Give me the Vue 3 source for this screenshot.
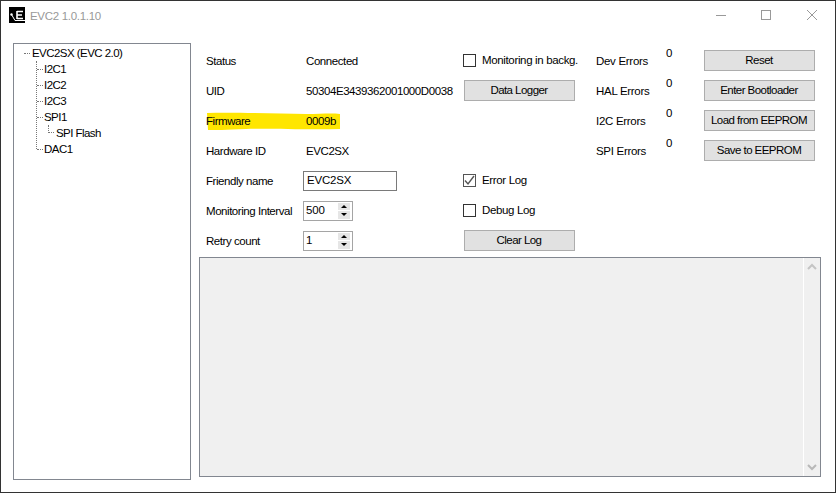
<script setup>
const tree = [
  { name: 'I2C1', level: 1 },
  { name: 'I2C2', level: 1 },
  { name: 'I2C3', level: 1 },
  { name: 'SPI1', level: 1 },
  { name: 'SPI Flash', level: 2 },
  { name: 'DAC1', level: 1 }
]
const errors = ['Dev Errors', 'HAL Errors', 'I2C Errors', 'SPI Errors']
</script>

<template>
  <div class="window">
    <header class="titlebar">
      <svg class="logo" width="16" height="16" viewBox="0 0 16 16">
        <rect width="16" height="16" fill="#000" />
        <path d="M8 4.5h6M8 4v8M8 8h5M8 11.5h6" stroke="#fff" stroke-width="1.6" fill="none" />
        <path d="M2.5 7.5l3.5 6h10" stroke="#fff" stroke-width="1" fill="none" />
        <circle cx="2.5" cy="7.5" r="1.2" fill="#fff" />
      </svg>
      <span class="title">EVC2 1.0.1.10</span>
      <div class="controls">
        <svg width="46" height="30" viewBox="0 0 46 30"><path d="M19 14.5h10" stroke="#999" /></svg>
        <svg width="46" height="30" viewBox="0 0 46 30"><rect x="18.5" y="9.5" width="9" height="9" fill="none" stroke="#999" /></svg>
        <svg width="46" height="30" viewBox="0 0 46 30"><path d="M18 9l10 10M28 9L18 19" stroke="#999" /></svg>
      </div>
    </header>

    <main class="body">
      <aside class="tree">
        <div class="node root"><i class="dash"></i>EVC2SX (EVC 2.0)</div>
        <div class="branches">
          <div v-for="n in tree" :key="n.name" class="node" :class="'lvl' + n.level">
            <i class="elbow"></i>{{ n.name }}
          </div>
        </div>
      </aside>

      <section class="content">
        <div class="form">
          <span class="cell c-label">Status</span>
          <span class="cell c-value">Connected</span>
          <label class="cell c-check"><i class="box"></i>Monitoring in backg.</label>
          <span class="cell c-err">{{ errors[0] }}</span>
          <span class="count">0</span>
          <button class="btn c-btn">Reset</button>

          <span class="cell c-label">UID</span>
          <span class="cell c-value">50304E3439362001000D0038</span>
          <button class="btn c-check-btn">Data Logger</button>
          <span class="cell c-err">{{ errors[1] }}</span>
          <span class="count">0</span>
          <button class="btn c-btn">Enter Bootloader</button>

          <span class="cell c-label hl-host">
            <svg class="highlight" width="136" height="24" viewBox="0 0 136 24">
              <path d="M1 4 C30 3 70 5 100 5 C115 5 125 4 134 5 L134 20 C100 21 60 19 40 20 C20 21 8 21 2 21 Z" fill="#ffe600" />
            </svg>
            <span class="over">Firmware</span>
          </span>
          <span class="cell c-value over">0009b</span>
          <span class="cell c-err">{{ errors[2] }}</span>
          <span class="count">0</span>
          <button class="btn c-btn">Load from EEPROM</button>

          <span class="cell c-label">Hardware ID</span>
          <span class="cell c-value">EVC2SX</span>
          <span class="cell c-err">{{ errors[3] }}</span>
          <span class="count">0</span>
          <button class="btn c-btn">Save to EEPROM</button>

          <span class="cell c-label">Friendly name</span>
          <span class="input name">EVC2SX</span>
          <label class="cell c-check"><i class="box checked">
            <svg width="11" height="11" viewBox="0 0 11 11"><path d="M1 5.5l3 3.5 6-8" fill="none" stroke="#555" stroke-width="1.4" /></svg>
          </i>Error Log</label>

          <span class="cell c-label">Monitoring Interval</span>
          <span class="input spin"><span class="spin-text">500</span><span class="arrows"><b class="up"></b><b class="down"></b></span></span>
          <label class="cell c-check"><i class="box"></i>Debug Log</label>

          <span class="cell c-label">Retry count</span>
          <span class="input spin"><span class="spin-text">1</span><span class="arrows"><b class="up"></b><b class="down"></b></span></span>
          <button class="btn c-check-btn">Clear Log</button>
        </div>

        <div class="log">
          <div class="scroll">
            <svg width="16" height="16" viewBox="0 0 16 16"><path d="M4 10l4-4 4 4" fill="none" stroke="#c4c4c4" stroke-width="2" /></svg>
            <svg width="16" height="16" viewBox="0 0 16 16"><path d="M4 6l4 4 4-4" fill="none" stroke="#b8b8b8" stroke-width="2" /></svg>
          </div>
        </div>
      </section>
    </main>
  </div>
</template>

<style scoped>
.window {
  width: 836px;
  height: 493px;
  box-sizing: border-box;
  background: #fff;
  border: 1px solid #333;
  font: 11.5px/13px "Liberation Sans", Arial, sans-serif;
  letter-spacing: -0.45px;
  color: #000;
  display: flex;
  flex-direction: column;
  overflow: hidden;
}
.titlebar {
  height: 30px;
  display: flex;
  align-items: center;
  padding-left: 8px;
  flex: none;
}
.logo { flex: none; margin-bottom: 2px; }
.title {
  margin-left: 5px;
  color: #999;
  letter-spacing: -0.3px;
  padding-top: 1px;
}
.controls { margin-left: auto; display: flex; }
.controls svg { display: block; }
.body {
  flex: 1;
  display: flex;
  padding: 12px 14px 12px 12px;
  min-height: 0;
}
.tree {
  width: 178px;
  box-sizing: border-box;
  border: 1px solid #828790;
  padding: 1px 0 0 10px;
  flex: none;
  letter-spacing: -0.55px;
}
.node {
  height: 16px;
  line-height: 16px;
  white-space: nowrap;
  display: flex;
  align-items: center;
}
.dash {
  width: 6px;
  margin-right: 2px;
  border-top: 1px dotted #777;
  flex: none;
}
.branches {
  margin-left: 12px;
  width: max-content;
  position: relative;
}
.branches::before {
  content: "";
  position: absolute;
  left: 0;
  top: 0;
  bottom: 8px;
  border-left: 1px dotted #777;
}
.elbow {
  width: 6px;
  margin-left: 1px;
  border-top: 1px dotted #777;
  margin-right: 1px;
  flex: none;
}
.lvl2 { padding-left: 12px; }
.lvl2 .elbow {
  height: 8px;
  width: 6px;
  margin-left: 0;
  margin-right: 2px;
  align-self: flex-start;
  border-top: 0;
  border-left: 1px dotted #777;
  border-bottom: 1px dotted #777;
  box-sizing: border-box;
}
.content {
  flex: 1;
  margin-left: 8px;
  display: flex;
  flex-direction: column;
  min-width: 0;
}
.form {
  margin-top: 2px;
  display: grid;
  grid-template-columns: 100px 158px 132px 70px 38px 111px;
  grid-auto-rows: 30px;
  padding-left: 7px;
  align-items: center;
  height: 210px;
  flex: none;
}
.cell { white-space: nowrap; padding-top: 2px; }
.c-label { grid-column: 1; }
.c-value { grid-column: 2; letter-spacing: -0.42px; }
.c-check, .c-check-btn { grid-column: 3; }
.c-err { grid-column: 4; letter-spacing: -0.3px; }
.count { grid-column: 5; align-self: start; margin-top: 2px; }
.c-btn { grid-column: 6; }
.c-check {
  display: flex;
  align-items: center;
  margin-left: -1px;
  padding-top: 1px;
  letter-spacing: -0.35px;
}
.box {
  width: 11px;
  height: 11px;
  border: 1px solid #333;
  margin: -1px 6px 0 0;
  display: flex;
  align-items: center;
  justify-content: center;
  flex: none;
}
.box svg { flex: none; display: block; }
.box.checked { border-color: #555; }
.btn {
  width: 111px;
  height: 21px;
  margin-top: 1px;
  box-sizing: border-box;
  padding: 0 1px 0 0;
  background: #e1e1e1;
  border: 1px solid #adadad;
  font: inherit;
  letter-spacing: -0.55px;
  color: #000;
  white-space: nowrap;
}
.c-check-btn { width: 111px; }
.hl-host { position: relative; }
.highlight {
  position: absolute;
  left: 0;
  top: -3.5px;
}
.over { position: relative; }
.input {
  grid-column: 2;
  box-sizing: border-box;
  height: 20px;
  margin: 1px 0 0 -3px;
  border: 1px solid #7a7a7a;
  background: #fff;
  display: flex;
  align-items: center;
  padding-left: 2px;
  letter-spacing: -0.2px;
}
.name { width: 94px; padding-left: 3px; }
.spin { width: 50px; border-color: #a5a5a5; }
.spin-text { flex: 1; }
.arrows {
  width: 12px;
  height: 16px;
  display: flex;
  flex-direction: column;
  gap: 1px;
  margin-right: 2px;
}
.arrows b {
  flex: 1;
  background: #e6e6e6;
  display: flex;
  align-items: center;
  justify-content: center;
}
.arrows b::after {
  content: "";
  border-left: 3px solid transparent;
  border-right: 3px solid transparent;
}
.up::after { border-bottom: 3px solid #000; }
.down::after { border-top: 3px solid #000; }
.log {
  margin-top: 2px;
  height: 220px;
  width: 622px;
  box-sizing: border-box;
  border: 1px solid #828790;
  background: #f0f0f0;
  display: flex;
  justify-content: flex-end;
}
.scroll {
  width: 17px;
  border-left: 1px solid #fff;
  display: flex;
  flex-direction: column;
  justify-content: space-between;
  padding: 1px 0;
  box-sizing: border-box;
}
</style>
